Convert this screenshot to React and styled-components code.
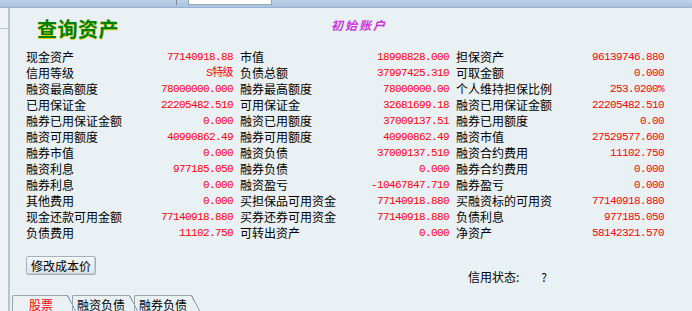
import styled, { createGlobalStyle } from 'styled-components';

const GlobalStyle = createGlobalStyle`
  html, body {
    margin: 0;
    padding: 0;
    background: #eaf1f5;
    overflow: hidden;
  }
  body {
    font-family: "Noto Sans CJK SC", "Liberation Sans", sans-serif;
  }
`;

const rows = [
  ['现金资产', '77140918.88', '市值', '18998828.000', '担保资产', '96139746.880'],
  ['信用等级', 'S特级', '负债总额', '37997425.310', '可取金额', '0.000'],
  ['融资最高额度', '78000000.000', '融券最高额度', '78000000.00', '个人维持担保比例', '253.0200%'],
  ['已用保证金', '22205482.510', '可用保证金', '32681699.18', '融资已用保证金额', '22205482.510'],
  ['融券已用保证金额', '0.000', '融资已用额度', '37009137.51', '融券已用额度', '0.00'],
  ['融资可用额度', '40990862.49', '融券可用额度', '40990862.49', '融资市值', '27529577.600'],
  ['融券市值', '0.000', '融资负债', '37009137.510', '融资合约费用', '11102.750'],
  ['融资利息', '977185.050', '融券负债', '0.000', '融券合约费用', '0.000'],
  ['融券利息', '0.000', '融资盈亏', '-10467847.710', '融券盈亏', '0.000'],
  ['其他费用', '0.000', '买担保品可用资金', '77140918.880', '买融资标的可用资', '77140918.880'],
  ['现金还款可用金额', '77140918.880', '买券还券可用资金', '77140918.880', '负债利息', '977185.050'],
  ['负债费用', '11102.750', '可转出资产', '0.000', '净资产', '58142321.570'],
];

const tabs = ['股票', '融资负债', '融券负债'];

function App() {
  return (
    <>
      <GlobalStyle />
      <TopBar>
        <TopDivider />
        <TopField />
      </TopBar>
      <Shell>
        <LeftStrip>
          <StripCell />
        </LeftStrip>
        <Main>
          <Header>
            <Title>查询资产</Title>
            <Account>初始账户</Account>
          </Header>
          <DataGrid>
            {rows.map((r, i) =>
              [0, 2, 4].map((c) => (
                <Cell key={`${i}-${c}`}>
                  <Label>{r[c]}</Label>
                  <Value>{r[c + 1]}</Value>
                </Cell>
              ))
            )}
          </DataGrid>
          <Footer>
            <EditButton>修改成本价</EditButton>
            <Status>
              信用状态:<StatusMark>?</StatusMark>
            </Status>
          </Footer>
          <Tabs>
            {tabs.map((t, i) => (
              <Tab key={t} active={i === 0}>
                {t}
              </Tab>
            ))}
          </Tabs>
        </Main>
      </Shell>
    </>
  );
}

const TopBar = styled.div`
  height: 7px;
  background: linear-gradient(#bcd2e8, #a8c2de);
  border-bottom: 1px solid #98b2d0;
  position: relative;
`;

const TopDivider = styled.div`
  position: absolute;
  left: 176px;
  top: 0;
  width: 1px;
  height: 5px;
  background: #7a8a9c;
`;

const TopField = styled.div`
  position: absolute;
  left: 188px;
  top: 0;
  width: 82px;
  height: 4px;
  background: #ffffff;
  border: 1px solid #9aa6b4;
  border-top: none;
`;

const Shell = styled.div`
  display: flex;
  height: 303px;
`;

const LeftStrip = styled.div`
  width: 8px;
  background: #eef3f7;
  border-right: 2px solid #b4c4d8;
`;

const StripCell = styled.div`
  height: 20px;
  border-bottom: 1px solid #b8c4d0;
`;

const Main = styled.div`
  flex: 1;
  display: flex;
  flex-direction: column;
  background: #eaf1f5;
  overflow: hidden;
`;

const Header = styled.div`
  flex-shrink: 0;
  display: flex;
  align-items: flex-start;
  height: 41px;
  padding-top: 8px;
  box-sizing: border-box;
`;

const Title = styled.div`
  margin-left: 27px;
  font-size: 20px;
  line-height: 26px;
  font-weight: bold;
  color: #008000;
  letter-spacing: 0.5px;
  text-shadow: 0.5px 0.5px 0 #d8d020;
`;

const Account = styled.div`
  margin-left: 212px;
  margin-top: 2px;
  font-size: 12px;
  line-height: 14px;
  font-weight: bold;
  font-style: italic;
  color: #cc33dd;
  letter-spacing: 2px;
`;

const DataGrid = styled.div`
  flex-shrink: 0;
  display: grid;
  grid-template-columns: 207px 209px 208px;
  column-gap: 7px;
  grid-auto-rows: 16px;
  margin-left: 16px;
`;

const Cell = styled.div`
  display: flex;
  justify-content: space-between;
  align-items: center;
  white-space: nowrap;
`;

const Label = styled.span`
  font-size: 12px;
  line-height: 16px;
  color: #000;
`;

const Value = styled.span`
  font-family: "Liberation Mono", "Noto Sans CJK SC", monospace;
  font-size: 11px;
  letter-spacing: -0.6px;
  line-height: 16px;
  color: #ff0000;
`;

const Footer = styled.div`
  flex-shrink: 0;
  display: flex;
  align-items: flex-start;
  margin-top: 15px;
  height: 28px;
`;

const EditButton = styled.button`
  margin-left: 16px;
  height: 19px;
  padding: 0 4px;
  font-family: "Noto Sans CJK SC", sans-serif;
  font-size: 12px;
  line-height: 15px;
  color: #000;
  background: linear-gradient(#f4f8fb, #d8e6f0);
  border: 1px solid #a8b0b8;
  border-radius: 2px;
  box-shadow: inset -1px -1px 0 #c4ccd4;
`;

const Status = styled.div`
  margin-left: 372px;
  margin-top: 14px;
  font-size: 12px;
  line-height: 14px;
  color: #000;
`;

const StatusMark = styled.span`
  margin-left: 22px;
`;

const Tabs = styled.div`
  flex-shrink: 0;
  display: flex;
  margin-top: auto;
  margin-left: 2px;
  height: 16px;
`;

const Tab = styled.div`
  position: relative;
  width: ${(p) => (p.active ? '56px' : '58px')};
  height: 16px;
  padding-left: ${(p) => (p.active ? '16px' : '4px')};
  box-sizing: border-box;
  font-size: 12px;
  line-height: 17px;
  color: ${(p) => (p.active ? '#ff0000' : '#000')};
  border-top: 1px solid #9aa4ae;
  border-left: 1px solid #9aa4ae;
  border-radius: 2px 0 0 0;
  margin-right: 4px;

  &::after {
    content: '';
    position: absolute;
    right: -8px;
    top: -1px;
    width: 9px;
    height: 17px;
    background: linear-gradient(to top right, transparent 47%, #9aa4ae 48%, #9aa4ae 54%, transparent 55%);
  }
`;

export default App;
